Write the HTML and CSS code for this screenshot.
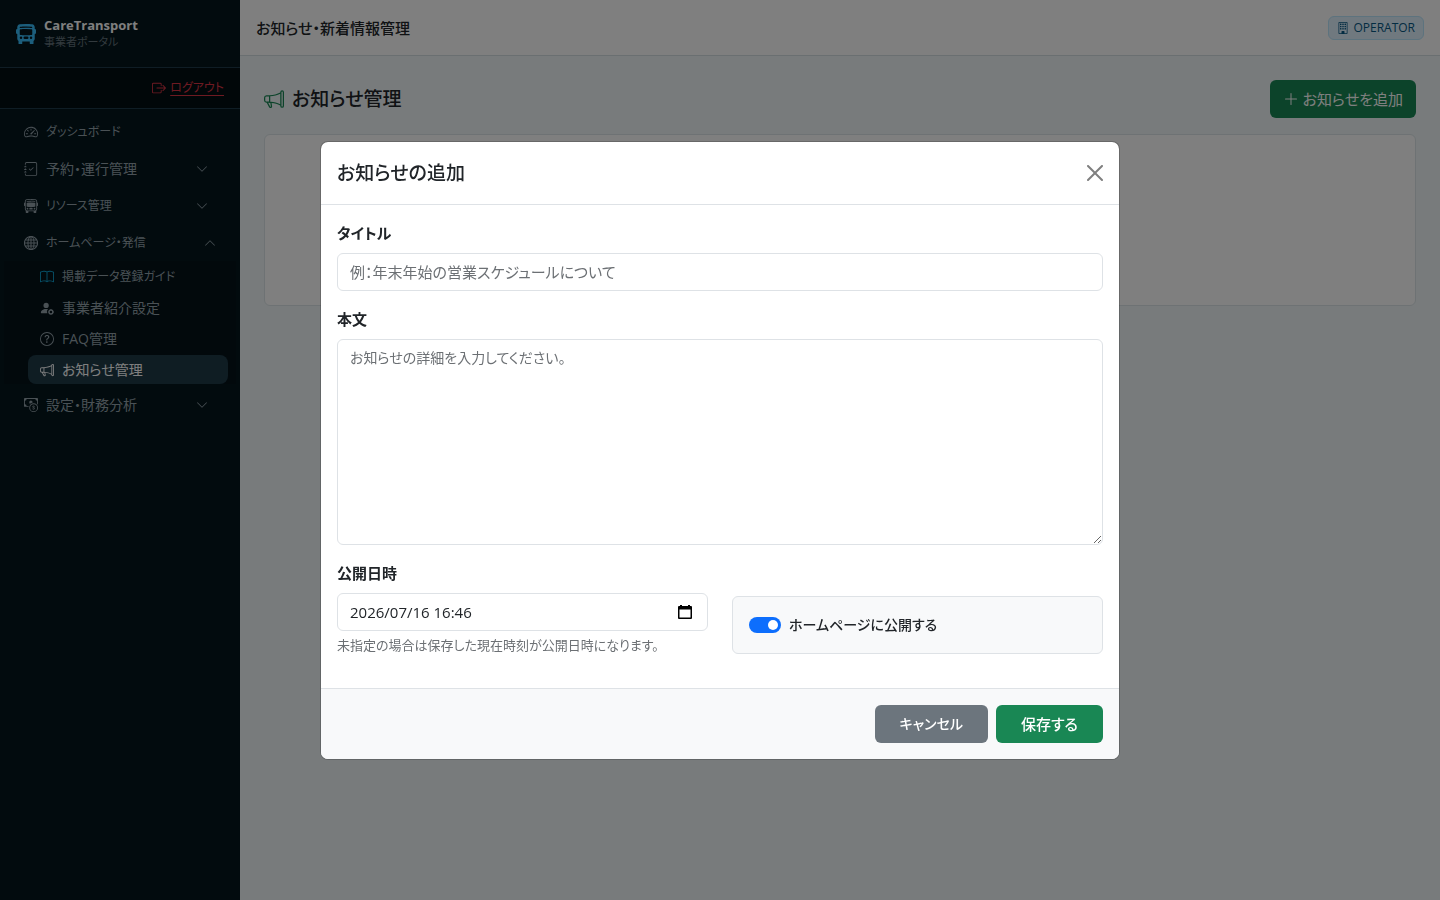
FILE: index.html
```html
<!DOCTYPE html>
<html lang="ja">
<head>
<meta charset="utf-8">
<meta name="viewport" content="width=device-width, initial-scale=1">
<title>お知らせ・新着情報管理</title>
<link rel="stylesheet" href="styles.css">
</head>
<body>
<div class="app">
  <aside class="sidebar">
    <div class="brand">
      <svg class="icon brand-icon" viewBox="0 0 16 16"><path d="M16 7a1 1 0 0 1-1 1v3.500c0 .818-.393 1.544-1 2v2a.5.5 0 0 1-.5.5h-2a.5.5 0 0 1-.5-.5V14H5v1.500a.5.5 0 0 1-.5.5h-2a.5.5 0 0 1-.5-.5v-2a2.500 2.500 0 0 1-1-2V8a1 1 0 0 1-1-1V5a1 1 0 0 1 1-1V2.640C1 1.452 1.845.408 3.064.268A44 44 0 0 1 8 0c2.100 0 3.792.136 4.936.268C14.155.408 15 1.452 15 2.640V4a1 1 0 0 1 1 1zM3.552 3.220A43 43 0 0 1 8 3c1.837 0 3.353.107 4.448.220a.5.5 0 0 0 .104-.994A44 44 0 0 0 8 2c-1.876 0-3.426.109-4.552.226a.5.5 0 1 0 .104.994M8 4c-1.876 0-3.426.109-4.552.226A.5.5 0 0 0 3 4.723v3.554a.5.5 0 0 0 .448.497C4.574 8.891 6.124 9 8 9s3.426-.109 4.552-.226A.5.5 0 0 0 13 8.277V4.723a.5.5 0 0 0-.448-.497A44 44 0 0 0 8 4m-3 7a1 1 0 1 0-2 0 1 1 0 0 0 2 0m8 0a1 1 0 1 0-2 0 1 1 0 0 0 2 0m-7 0a1 1 0 0 0 1 1h2a1 1 0 1 0 0-2H7a1 1 0 0 0-1 1"/></svg>
      <div class="brand-text">
        <div class="brand-name">CareTransport</div>
        <div class="brand-sub">事業者ポータル</div>
      </div>
    </div>
    <div class="logout">
      <svg class="icon" viewBox="0 0 16 16"><path fill-rule="evenodd" d="M10 12.5a.5.5 0 0 1-.5.5h-8a.5.5 0 0 1-.5-.5v-9a.5.5 0 0 1 .5-.5h8a.5.5 0 0 1 .5.5v2a.5.5 0 0 0 1 0v-2A1.5 1.5 0 0 0 9.500 2h-8A1.500 1.500 0 0 0 0 3.500v9A1.500 1.500 0 0 0 1.500 14h8a1.500 1.500 0 0 0 1.500-1.500v-2a.5.5 0 0 0-1 0z"/><path fill-rule="evenodd" d="M15.854 8.354a.5.5 0 0 0 0-.708l-3-3a.5.5 0 0 0-.708.708L14.293 7.500H5.500a.5.5 0 0 0 0 1h8.793l-2.147 2.146a.5.5 0 0 0 .708.708z"/></svg>
      <a class="compact" href="#">ログアウト</a>
    </div>
    <nav class="nav">
      <a class="nav-item" href="#">
        <svg class="icon" viewBox="0 0 16 16"><path d="M8 4a.5.5 0 0 1 .5.5V6a.5.5 0 0 1-1 0V4.500A.5.5 0 0 1 8 4M3.732 5.732a.5.5 0 0 1 .707 0l.915.914a.5.5 0 1 1-.708.708l-.914-.915a.5.5 0 0 1 0-.707M2 10a.5.5 0 0 1 .5-.5h1.586a.5.5 0 0 1 0 1H2.500A.5.5 0 0 1 2 10m9.500 0a.5.5 0 0 1 .5-.5h1.500a.5.5 0 0 1 0 1H12a.5.5 0 0 1-.5-.5m.754-4.246a.39.39 0 0 0-.527-.02L7.547 9.310a.91.91 0 1 0 1.302 1.258l3.434-4.297a.39.39 0 0 0-.029-.518z"/><path fill-rule="evenodd" d="M0 10a8 8 0 1 1 15.547 2.661c-.442 1.253-1.845 1.602-2.932 1.250C11.309 13.488 9.475 13 8 13c-1.474 0-3.310.488-4.615.911-1.087.352-2.490.003-2.932-1.250A8 8 0 0 1 0 10m8-7a7 7 0 0 0-6.603 9.329c.203.575.923.876 1.680.630C4.397 12.533 6.358 12 8 12s3.604.532 4.923.960c.757.245 1.477-.056 1.680-.631A7 7 0 0 0 8 3"/></svg>
        <span class="compact">ダッシュボード</span>
      </a>
      <button class="nav-item" type="button">
        <svg class="icon" viewBox="0 0 16 16"><path fill-rule="evenodd" d="M10.854 6.146a.5.5 0 0 1 0 .708l-3 3a.5.5 0 0 1-.708 0l-1.500-1.500a.5.5 0 1 1 .708-.708L7.500 8.793l2.646-2.647a.5.5 0 0 1 .708 0"/><path d="M3 0h10a2 2 0 0 1 2 2v12a2 2 0 0 1-2 2H3a2 2 0 0 1-2-2v-1h1v1a1 1 0 0 0 1 1h10a1 1 0 0 0 1-1V2a1 1 0 0 0-1-1H3a1 1 0 0 0-1 1v1H1V2a2 2 0 0 1 2-2"/><path d="M1 5v-.5a.5.5 0 0 1 1 0V5h.5a.5.5 0 0 1 0 1h-2a.5.5 0 0 1 0-1zm0 3v-.5a.5.5 0 0 1 1 0V8h.5a.5.5 0 0 1 0 1h-2a.5.5 0 0 1 0-1zm0 3v-.5a.5.5 0 0 1 1 0v.5h.5a.5.5 0 0 1 0 1h-2a.5.5 0 0 1 0-1z"/></svg>
        <span>予約・運行管理</span>
        <svg class="icon chevron" viewBox="0 0 16 16"><path d="M1.646 4.646a.5.5 0 0 1 .708 0L8 10.293l5.646-5.647a.5.5 0 0 1 .708.708l-6 6a.5.5 0 0 1-.708 0l-6-6a.5.5 0 0 1 0-.708"/></svg>
      </button>
      <button class="nav-item" type="button">
        <svg class="icon" viewBox="0 0 16 16"><path d="M5 11a1 1 0 1 1-2 0 1 1 0 0 1 2 0m8 0a1 1 0 1 1-2 0 1 1 0 0 1 2 0m-6-1a1 1 0 1 0 0 2h2a1 1 0 1 0 0-2zm1-6c-1.876 0-3.426.109-4.552.226A.5.5 0 0 0 3 4.723v3.554a.5.5 0 0 0 .448.497C4.574 8.891 6.124 9 8 9s3.426-.109 4.552-.226A.5.5 0 0 0 13 8.277V4.723a.5.5 0 0 0-.448-.497A44 44 0 0 0 8 4m0-1c-1.837 0-3.353.107-4.448.22a.5.5 0 1 1-.104-.994A44 44 0 0 1 8 2c1.876 0 3.426.109 4.552.226a.5.5 0 1 1-.104.994A43 43 0 0 0 8 3"/><path d="M15 8a1 1 0 0 0 1-1V5a1 1 0 0 0-1-1V2.64c0-1.188-.845-2.232-2.064-2.372A44 44 0 0 0 8 0C5.9 0 4.208.136 3.064.268 1.845.408 1 1.452 1 2.64V4a1 1 0 0 0-1 1v2a1 1 0 0 0 1 1v3.5c0 .818.393 1.544 1 2v2a.5.5 0 0 0 .5.5h2a.5.5 0 0 0 .5-.5V14h6v1.5a.5.5 0 0 0 .5.5h2a.5.5 0 0 0 .5-.5v-2c.607-.456 1-1.182 1-2zM8 1c2.056 0 3.71.134 4.822.261.676.078 1.178.66 1.178 1.379v8.86a1.5 1.5 0 0 1-1.5 1.5h-9A1.5 1.5 0 0 1 2 11.5V2.64c0-.72.502-1.301 1.178-1.379A43 43 0 0 1 8 1"/></svg>
        <span class="compact">リソース管理</span>
        <svg class="icon chevron" viewBox="0 0 16 16"><path d="M1.646 4.646a.5.5 0 0 1 .708 0L8 10.293l5.646-5.647a.5.5 0 0 1 .708.708l-6 6a.5.5 0 0 1-.708 0l-6-6a.5.5 0 0 1 0-.708"/></svg>
      </button>
      <button class="nav-item nav-item-open" type="button" aria-expanded="true">
        <svg class="icon icon-line" viewBox="0 0 16 16"><circle cx="8" cy="8" r="7.500"/><ellipse cx="8" cy="8" rx="3.500" ry="7.500"/><path d="M8 .5v15M.5 8h15M1.700 4.500h12.600M1.700 11.500h12.600"/></svg>
        <span class="compact">ホームページ・発信</span>
        <svg class="icon chevron" viewBox="0 0 16 16"><path d="M7.646 4.646a.5.5 0 0 1 .708 0l6 6a.5.5 0 0 1-.708.708L8 5.707l-5.646 5.647a.5.5 0 0 1-.708-.708z"/></svg>
      </button>
      <div class="subnav">
        <a class="sub-item" href="#">
          <svg class="icon icon-guide" viewBox="0 0 16 16"><path d="M1 2.828c.885-.370 2.154-.769 3.388-.893 1.330-.134 2.458.063 3.112.752v9.746c-.935-.530-2.120-.603-3.213-.493-1.180.120-2.370.461-3.287.811zm7.500-.141c.654-.689 1.782-.886 3.112-.752 1.234.124 2.503.523 3.388.893v9.923c-.918-.350-2.107-.692-3.287-.810-1.094-.111-2.278-.039-3.213.492zM8 1.783C7.015.936 5.587.810 4.287.940c-1.514.153-3.042.672-3.994 1.105A.5.5 0 0 0 0 2.500v11a.5.5 0 0 0 .707.455c.882-.400 2.303-.881 3.680-1.020 1.409-.142 2.590.087 3.223.877a.5.5 0 0 0 .780 0c.633-.790 1.814-1.019 3.222-.877 1.378.139 2.800.620 3.681 1.020A.5.5 0 0 0 16 13.500v-11a.5.5 0 0 0-.293-.455c-.952-.433-2.480-.952-3.994-1.105C10.413.809 8.985.936 8 1.783"/></svg>
          <span class="compact">掲載データ登録ガイド</span>
        </a>
        <a class="sub-item" href="#">
          <svg class="icon" viewBox="0 0 16 16"><circle cx="7" cy="5" r="3"/><path d="M8.300 14H2s-1 0-1-1 1-4 6-4c.8 0 1.500.1 2.100.2A4.200 4.200 0 0 0 8.300 14"/><circle cx="12.500" cy="12.500" r="2.200" fill="none" stroke="currentColor" stroke-width="1.500"/><path d="M12 9h1v1h-1zm0 6h1v1h-1zm-3-3h1v1H9zm6 0h1v1h-1z"/></svg>
          <span>事業者紹介設定</span>
        </a>
        <a class="sub-item" href="#">
          <svg class="icon" viewBox="0 0 16 16"><path d="M8 15A7 7 0 1 1 8 1a7 7 0 0 1 0 14m0 1A8 8 0 1 0 8 0a8 8 0 0 0 0 16"/><path d="M5.255 5.786a.237.237 0 0 0 .241.247h.825c.138 0 .248-.113.266-.250.090-.656.540-1.134 1.342-1.134.686 0 1.314.343 1.314 1.168 0 .635-.374.927-.965 1.371-.673.489-1.206 1.060-1.168 1.987l.003.217a.25.25 0 0 0 .250.246h.811a.25.25 0 0 0 .250-.250v-.105c0-.718.273-.927 1.010-1.486.609-.463 1.244-.977 1.244-2.056 0-1.511-1.276-2.241-2.673-2.241-1.267 0-2.655.590-2.750 2.286m1.557 5.763c0 .533.425.927 1.010.927.609 0 1.028-.394 1.028-.927 0-.552-.420-.940-1.029-.940-.584 0-1.009.388-1.009.940"/></svg>
          <span>FAQ管理</span>
        </a>
        <a class="sub-item sub-item-active" href="#" aria-current="page">
          <svg class="icon" viewBox="0 0 16 16"><path d="M13 2.500a1.500 1.500 0 0 1 3 0v11a1.500 1.500 0 0 1-3 0v-.214c-2.162-1.241-4.490-1.843-6.912-2.083l.405 2.712A1 1 0 0 1 5.510 15.100h-.548a1 1 0 0 1-.916-.599l-1.850-3.490-.202-.003A2.014 2.014 0 0 1 0 9V7a2.020 2.020 0 0 1 1.992-2.013 75 75 0 0 0 2.483-.075c3.043-.154 6.148-.849 8.525-2.199zm1 0v11a.5.5 0 0 0 1 0v-11a.5.5 0 0 0-1 0m-1 1.350c-2.344 1.205-5.209 1.842-8 2.033v4.233q.270.015.537.036c2.568.189 5.093.744 7.463 1.993zm-9 6.215v-4.130a95 95 0 0 1-1.992.052A1.020 1.020 0 0 0 1 7v2c0 .550.448 1.002 1.006 1.009A61 61 0 0 1 4 10.065m-.657.975 1.609 3.037.010.024h.548l-.002-.014-.443-2.966a68 68 0 0 0-1.722-.082z"/></svg>
          <span>お知らせ管理</span>
        </a>
      </div>
      <button class="nav-item" type="button">
        <svg class="icon" viewBox="0 0 16 16"><path fill-rule="evenodd" d="M11 15a4 4 0 1 0 0-8 4 4 0 0 0 0 8m5-4a5 5 0 1 1-10 0 5 5 0 0 1 10 0"/><path d="M9.438 11.944c.047.596.518 1.060 1.363 1.116v.440h.375v-.443c.875-.061 1.386-.529 1.386-1.207 0-.618-.390-.936-1.090-1.100l-.296-.070v-1.200c.376.043.614.248.671.532h.658c-.047-.575-.540-1.024-1.329-1.073V8.500h-.375v.450c-.747.073-1.255.522-1.255 1.158 0 .562.378.920 1.007 1.066l.248.061v1.272c-.384-.058-.639-.270-.696-.563h-.668zm1.360-1.354c-.369-.085-.569-.260-.569-.522 0-.294.216-.514.572-.578v1.100zm.432.746c.449.104.655.272.655.569 0 .339-.257.571-.709.614v-1.195z"/><path d="M1 0a1 1 0 0 0-1 1v8a1 1 0 0 0 1 1h4.083q.088-.517.258-1H3a2 2 0 0 0-2-2V3a2 2 0 0 0 2-2h10a2 2 0 0 0 2 2v3.528c.380.340.717.728 1 1.154V1a1 1 0 0 0-1-1z"/><path d="M9.998 5.083 10 5a2 2 0 1 0-3.132 1.650 6 6 0 0 1 3.130-1.567"/></svg>
        <span>設定・財務分析</span>
        <svg class="icon chevron" viewBox="0 0 16 16"><path d="M1.646 4.646a.5.5 0 0 1 .708 0L8 10.293l5.646-5.647a.5.5 0 0 1 .708.708l-6 6a.5.5 0 0 1-.708 0l-6-6a.5.5 0 0 1 0-.708"/></svg>
      </button>
    </nav>
  </aside>

  <div class="main">
    <header class="topbar">
      <div class="topbar-title">お知らせ・新着情報管理</div>
      <span class="role">
        <svg class="icon" viewBox="0 0 16 16"><path d="M4 2.500a.5.5 0 0 1 .5-.5h1a.5.5 0 0 1 .5.5v1a.5.5 0 0 1-.5.5h-1a.5.5 0 0 1-.5-.5zm3 0a.5.5 0 0 1 .5-.5h1a.5.5 0 0 1 .5.5v1a.5.5 0 0 1-.5.5h-1a.5.5 0 0 1-.5-.5zm3.500-.5a.5.5 0 0 0-.5.5v1a.5.5 0 0 0 .5.5h1a.5.5 0 0 0 .5-.5v-1a.5.5 0 0 0-.5-.5zM4 5.500a.5.5 0 0 1 .5-.5h1a.5.5 0 0 1 .5.5v1a.5.5 0 0 1-.5.5h-1a.5.5 0 0 1-.5-.5zM7.500 5a.5.5 0 0 0-.5.5v1a.5.5 0 0 0 .5.5h1a.5.5 0 0 0 .5-.5v-1a.5.5 0 0 0-.5-.5zm2.500.5a.5.5 0 0 1 .5-.5h1a.5.5 0 0 1 .5.5v1a.5.5 0 0 1-.5.5h-1a.5.5 0 0 1-.5-.5zM4.500 8a.5.5 0 0 0-.5.5v1a.5.5 0 0 0 .5.5h1a.5.5 0 0 0 .5-.5v-1a.5.5 0 0 0-.5-.5zm2.500.5a.5.5 0 0 1 .5-.5h1a.5.5 0 0 1 .5.5v1a.5.5 0 0 1-.5.5h-1a.5.5 0 0 1-.5-.5zm3.500-.5a.5.5 0 0 0-.5.5v1a.5.5 0 0 0 .5.5h1a.5.5 0 0 0 .5-.5v-1a.5.5 0 0 0-.5-.5z"/><path d="M2 1a1 1 0 0 1 1-1h10a1 1 0 0 1 1 1v14a1 1 0 0 1-1 1H3a1 1 0 0 1-1-1zm11 0H3v14h3v-2.500a.5.5 0 0 1 .5-.5h3a.5.5 0 0 1 .5.5V15h3z"/></svg>
        OPERATOR
      </span>
    </header>
    <main class="content">
      <div class="page-head">
        <h1 class="page-title">
          <svg class="icon" viewBox="0 0 16 16"><path d="M13 2.500a1.500 1.500 0 0 1 3 0v11a1.500 1.500 0 0 1-3 0v-.214c-2.162-1.241-4.490-1.843-6.912-2.083l.405 2.712A1 1 0 0 1 5.510 15.100h-.548a1 1 0 0 1-.916-.599l-1.850-3.490-.202-.003A2.014 2.014 0 0 1 0 9V7a2.020 2.020 0 0 1 1.992-2.013 75 75 0 0 0 2.483-.075c3.043-.154 6.148-.849 8.525-2.199zm1 0v11a.5.5 0 0 0 1 0v-11a.5.5 0 0 0-1 0m-1 1.350c-2.344 1.205-5.209 1.842-8 2.033v4.233q.270.015.537.036c2.568.189 5.093.744 7.463 1.993zm-9 6.215v-4.130a95 95 0 0 1-1.992.052A1.020 1.020 0 0 0 1 7v2c0 .550.448 1.002 1.006 1.009A61 61 0 0 1 4 10.065m-.657.975 1.609 3.037.010.024h.548l-.002-.014-.443-2.966a68 68 0 0 0-1.722-.082z"/></svg>
          お知らせ管理
        </h1>
        <button class="btn btn-success btn-add" type="button">
          <svg class="icon" viewBox="0 0 16 16"><path fill-rule="evenodd" d="M8 2a.5.5 0 0 1 .5.5v5h5a.5.5 0 0 1 0 1h-5v5a.5.5 0 0 1-1 0v-5h-5a.5.5 0 0 1 0-1h5v-5A.5.5 0 0 1 8 2"/></svg>
          お知らせを追加
        </button>
      </div>
      <section class="card"></section>
    </main>
  </div>
</div>

<div class="backdrop">
  <form class="modal" role="dialog" aria-modal="true" aria-labelledby="modal-title">
    <div class="modal-header">
      <h2 class="modal-title" id="modal-title">お知らせの追加</h2>
      <button class="close" type="button" aria-label="閉じる">
        <svg class="icon" viewBox="0 0 16 16"><path d="M.293.293a1 1 0 0 1 1.414 0L8 6.586 14.293.293a1 1 0 1 1 1.414 1.414L9.414 8l6.293 6.293a1 1 0 0 1-1.414 1.414L8 9.414l-6.293 6.293a1 1 0 0 1-1.414-1.414L6.586 8 .293 1.707a1 1 0 0 1 0-1.414"/></svg>
      </button>
    </div>
    <div class="modal-body">
      <div class="field">
        <label class="label" for="news-title">タイトル</label>
        <input class="control" id="news-title" type="text" placeholder="例：年末年始の営業スケジュールについて">
      </div>
      <div class="field">
        <label class="label" for="news-body">本文</label>
        <textarea class="control" id="news-body" rows="8" placeholder="お知らせの詳細を入力してください。"></textarea>
      </div>
      <div class="field-row">
        <div class="col">
          <label class="label" for="news-date">公開日時</label>
          <div class="control date-control">
            <input class="date-input" id="news-date" type="text" value="2026/07/16 16:46">
            <button class="date-picker" type="button" aria-label="日時を選択">
              <svg class="icon" viewBox="0 0 16 16"><path fill-rule="evenodd" d="M3 1h2v1h6V1h2v1h1a1 1 0 0 1 1 1v11a1 1 0 0 1-1 1H2a1 1 0 0 1-1-1V3a1 1 0 0 1 1-1h1zM2.500 5.500v8h11v-8z"/></svg>
            </button>
          </div>
          <div class="help">未指定の場合は保存した現在時刻が公開日時になります。</div>
        </div>
        <div class="col">
          <div class="switch-box">
            <input class="switch" id="news-public" type="checkbox" role="switch" checked>
            <label class="switch-label" for="news-public">ホームページに公開する</label>
          </div>
        </div>
      </div>
    </div>
    <div class="modal-footer">
      <button class="btn btn-secondary" type="button">キャンセル</button>
      <button class="btn btn-success" type="submit">保存する</button>
    </div>
  </form>
</div>
</body>
</html>
```

FILE: styles.css
```css
*, *::before, *::after { box-sizing: border-box; }

body {
  margin: 0;
  font-family: "Open Sans", "Noto Sans CJK JP", sans-serif;
  font-feature-settings: "palt";
  font-size: 15px;
  line-height: 24px;
  color: #212529;
  background: #f0f7f9;
}

button, input, textarea {
  font: inherit;
  font-feature-settings: inherit;
  color: inherit;
}

button { cursor: pointer; }

.icon {
  width: 14px;
  height: 14px;
  flex: none;
  fill: currentColor;
}
.icon-line { fill: none; stroke: currentColor; stroke-width: 1.2; }

.app { display: flex; min-height: 100vh; }

/* Sidebar */
.sidebar {
  width: 240px;
  flex: none;
  background: #05161d;
  color: #94a3ab;
  font-size: 14px;
  line-height: 21px;
}
.brand {
  display: flex;
  align-items: center;
  gap: 8px;
  padding: 16px;
  border-bottom: 1px solid #1e3a4a;
}
.brand-icon { width: 20px; height: 20px; color: #38bdf8; }
.brand-text { padding-bottom: 1px; }
.brand-name { font-size: 13px; line-height: 18px; font-weight: 700; color: #fff; }
.brand-sub { font-size: 11px; line-height: 16px; color: #64747c; }
.logout {
  display: flex;
  justify-content: flex-end;
  align-items: center;
  gap: 4px;
  padding: 9px 16px 10px;
  border-bottom: 1px solid #1e3a4a;
  background: #030e13;
  color: #dc3545;
}
.logout a { color: inherit; text-underline-offset: 3px; }
.compact { font-size: 12px; }
.nav { padding: 4px; }
.nav-item {
  display: flex;
  align-items: center;
  gap: 8px;
  width: 100%;
  padding: 8px 28px 8px 20px;
  border: 0;
  background: none;
  text-align: left;
  text-decoration: none;
  color: inherit;
}
.nav-item-open { padding-right: 20px; }
.chevron { width: 12px; height: 12px; margin-left: auto; }
.subnav {
  padding: 0 8px 0 24px;
  margin-bottom: 2px;
  background: #041219;
}
.sub-item {
  display: flex;
  align-items: center;
  gap: 8px;
  margin: 0;
  padding: 4px 12px;
  border: solid transparent;
  border-width: 1px 0;
  color: inherit;
  text-decoration: none;
}
.icon-guide { color: #0ea5d5; }
.sub-item-active {
  border: 0;
  margin: 1px 0;
  border-radius: 8px;
  background: #1e3a47;
  color: #fff;
}

/* Page */
.main { flex: 1; min-width: 0; }
.topbar {
  display: flex;
  justify-content: space-between;
  align-items: center;
  min-height: 56px;
  padding: 0 16px;
  border-bottom: 1px solid #d5dfe3;
  background: #fff;
}
.topbar-title { font-weight: 500; }
.role {
  display: flex;
  align-items: center;
  gap: 4px;
  padding: 2px 8px;
  border: 1px solid #bae6fd;
  border-radius: 6px;
  background: #e0f2fe;
  color: #075985;
  font-size: 12px;
  line-height: 18px;
  font-weight: 500;
}
.role .icon { width: 12px; height: 12px; }
.content { padding: 24px; }
.page-head {
  display: flex;
  justify-content: space-between;
  align-items: center;
  margin-bottom: 16px;
}
.page-title {
  display: flex;
  align-items: center;
  gap: 8px;
  margin: 0;
  font-size: 19px;
  line-height: 24px;
  font-weight: 500;
}
.page-title .icon { width: 20px; height: 20px; color: #198754; }
.card {
  min-height: 172px;
  border: 1px solid #dce5e8;
  border-radius: 6px;
  background: #fff;
}

.btn {
  display: inline-flex;
  align-items: center;
  justify-content: center;
  gap: 4px;
  padding: 6px 24px;
  border: 1px solid transparent;
  border-radius: 6px;
  color: #fff;
  font-weight: 500;
}
.btn-success { background: #198754; }
.btn-secondary { background: #6c757d; }
.btn-add { padding: 6px 12px; font-weight: 400; }
.btn-add .icon { width: 16px; height: 16px; }

/* Dialog */
.backdrop {
  position: fixed;
  inset: 0;
  display: flex;
  align-items: center;
  justify-content: center;
  background: rgba(0, 0, 0, .5);
}
.modal {
  width: 100%;
  max-width: 800px;
  border: 1px solid rgba(0, 0, 0, .18);
  border-radius: 8px;
  background: #fff;
  background-clip: padding-box;
}
.modal-header {
  display: flex;
  align-items: center;
  justify-content: space-between;
  padding: 16px;
  border-bottom: 1px solid #dee2e6;
}
.modal-title {
  margin: 0;
  font-size: 19px;
  line-height: 30px;
  font-weight: 500;
}
.close {
  display: flex;
  padding: 0;
  border: 0;
  background: none;
  color: #7f7f7f;
}
.close .icon { width: 16px; height: 16px; }
.modal-body { padding: 16px 16px 32px; }
.field { margin-bottom: 16px; }
.label { display: block; margin-bottom: 8px; font-weight: 700; }
.control {
  display: block;
  width: 100%;
  padding: 6px 12px;
  border: 1px solid #dee2e6;
  border-radius: 6px;
  background: #fff;
}
.control::placeholder { color: #6c7074; opacity: 1; }
textarea.control { resize: vertical; font-size: 14px; }
.field-row {
  display: grid;
  grid-template-columns: 1fr 1fr;
  gap: 24px;
  align-items: end;
}
.date-control { display: flex; align-items: center; }
.date-input {
  flex: 1;
  min-width: 0;
  height: 24px;
  padding: 0;
  border: 0;
  background: none;
}
.date-picker {
  display: flex;
  padding: 0 2px;
  border: 0;
  background: none;
  color: #000;
}
.date-picker .icon { width: 16px; height: 16px; }
.help { margin-top: 4px; font-size: 13px; line-height: 21px; color: #6c7074; }
.switch-box {
  display: flex;
  align-items: center;
  gap: 8px;
  margin-bottom: 2px;
  padding: 16px;
  border: 1px solid #dee2e6;
  border-radius: 6px;
  background: #f8f9fa;
}
.switch {
  appearance: none;
  width: 32px;
  height: 16px;
  margin: 0;
  padding: 3px;
  border-radius: 8px;
  background: #0d6efd;
}
.switch::before {
  content: "";
  display: block;
  width: 10px;
  height: 10px;
  border-radius: 50%;
  background: #fff;
}
.switch:checked::before { margin-left: auto; }
.switch-label { font-size: 14px; font-weight: 500; }
.modal-footer {
  display: flex;
  justify-content: flex-end;
  gap: 8px;
  padding: 16px;
  border-top: 1px solid #dee2e6;
  border-radius: 0 0 7px 7px;
  background: #f8f9fa;
}
.modal-footer .btn-secondary { font-size: 14px; }
```
